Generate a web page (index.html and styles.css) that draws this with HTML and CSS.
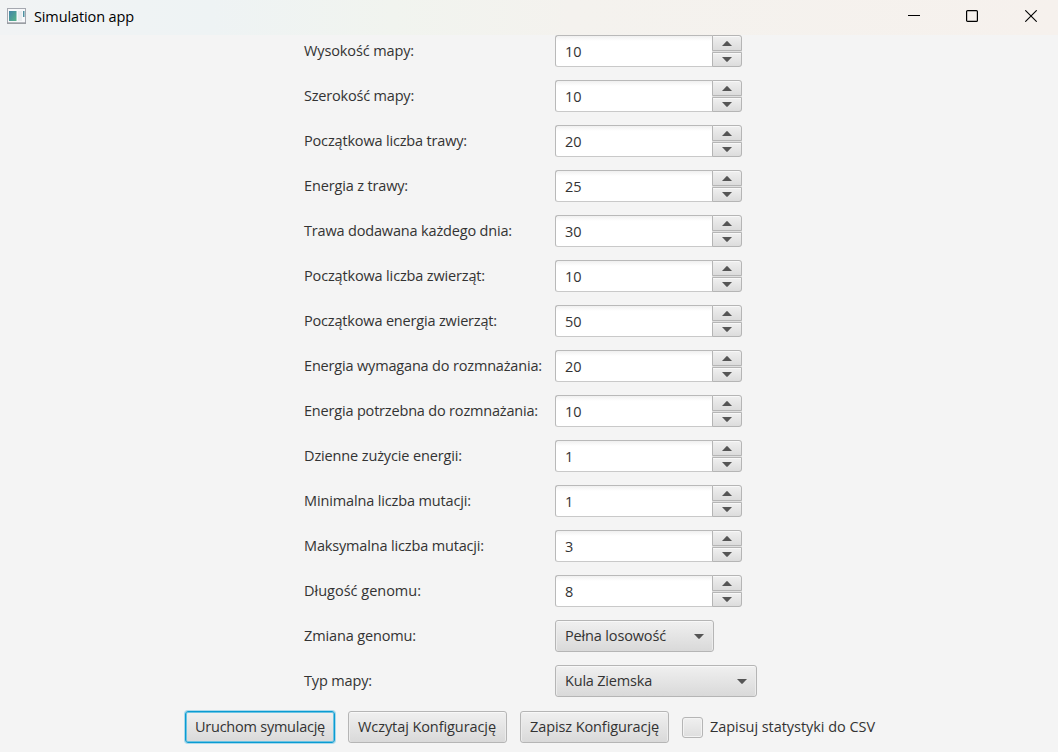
FILE: index.html
```html
<!DOCTYPE html>
<html lang="pl">
<head>
<meta charset="utf-8">
<title>Simulation app</title>
<link rel="stylesheet" href="styles.css">
</head>
<body>
<header class="titlebar">
  <svg class="app-icon" width="19" height="16" viewBox="0 0 19 16">
    <defs><linearGradient id="pane" x1="0" y1="0" x2="1" y2="1"><stop offset="0" stop-color="#4384a8"/><stop offset="1" stop-color="#58b489"/></linearGradient></defs>
    <rect x="0.5" y="0.5" width="18" height="14.5" fill="#f7f8fa" stroke="#a5a8b0"/>
    <path d="M0 15.2H19" stroke="#85888f"/>
    <rect x="2" y="3" width="7.5" height="10" fill="url(#pane)"/>
    <rect x="11" y="3" width="4" height="10" fill="#e9ecef"/>
    <rect x="16" y="3" width="1.5" height="6" fill="#4f91a1"/>
  </svg>
  <span class="title"><span class="fit" data-width="100">Simulation app</span></span>
  <div class="controls">
    <svg width="12" height="12" viewBox="0 0 12 12"><path d="M0 5.5H12" stroke="#000"/></svg>
    <svg width="12" height="12" viewBox="0 0 12 12"><rect x="0.6" y="0.6" width="10.8" height="10.8" rx="1" fill="none" stroke="#000" stroke-width="1.2"/></svg>
    <svg width="12" height="12" viewBox="0 0 12 12"><path d="M0.3 0.3L11.7 11.7M11.7 0.3L0.3 11.7" stroke="#000" stroke-width="1.1"/></svg>
  </div>
</header>
<main class="form" id="form"></main>
<footer class="actions">
  <button class="btn btn-run focused"><span class="fit" data-width="130">Uruchom symulację</span></button>
  <button class="btn btn-load"><span class="fit" data-width="138">Wczytaj Konfigurację</span></button>
  <button class="btn btn-save"><span class="fit" data-width="129">Zapisz Konfigurację</span></button>
  <label class="check"><span class="box"></span><span class="fit" data-width="165">Zapisuj statystyki do CSV</span></label>
</footer>
<script src="app.js"></script>
</body>
</html>
```
FILE: styles.css
```css
* { box-sizing: border-box; }
body {
  margin: 0;
  width: 1058px;
  height: 752px;
  overflow: hidden;
  background: #f4f4f4;
  color: #333;
  font: 14.5px/20px "Open Sans", "Noto Sans", sans-serif;
}
.titlebar {
  display: flex;
  align-items: flex-start;
  height: 35px;
  padding: 8px 21px 0 7px;
  background: linear-gradient(90deg, #f1f3f4 0%, #eef3f4 20%, #f1f4ef 37%, #f4f2ee 54%, #f6f1ed 100%);
  color: #000;
}
.title { margin: -2px 0 0 8px; line-height: 21px; }
.controls { display: flex; gap: 46px; margin: 2px 0 0 auto; }
.controls svg:last-child { margin-left: 1px; }
.controls svg, .app-icon { display: block; }
.form {
  display: grid;
  grid-template-columns: 238px 202px;
  grid-auto-rows: 32px;
  gap: 13px;
  margin-left: 304px;
}
.label { line-height: 31px; white-space: nowrap; }
.fit { display: inline-block; white-space: nowrap; }
.spinner {
  display: grid;
  grid-template-columns: 157px 30px;
  width: 187px;
  height: 32px;
}
.field {
  height: 32px;
  padding-left: 9px;
  border: 1px solid #b9b9b9;
  border-bottom-color: #c9c9c9;
  border-right: 0;
  border-radius: 3px 0 0 3px;
  background: linear-gradient(#f0f0f0, #fff 5px);
  line-height: 32px;
}
.steps {
  display: grid;
  grid-template-rows: 16px 15px;
  gap: 1px;
  border-radius: 0 3px 3px 0;
  background: #e0e0e0;
}
.step {
  display: flex;
  align-items: center;
  justify-content: center;
  border: 1px solid #b5b5b5;
  background: linear-gradient(#f0f0f0, #dcdcdc);
  box-shadow: inset 0 1px 0 #f8f8f8;
}
.step.up { border-radius: 0 3px 0 0; }
.step.down { border-radius: 0 0 3px 0; }
.step svg, .combo svg { display: block; fill: #555; }
.combo, .btn {
  border: 1px solid #b5b5b5;
  border-radius: 3px;
  background: linear-gradient(#f0f0f0, #d9d9d9);
  box-shadow: inset 0 1px 0 #f8f8f8, inset 1px 0 0 #ececec, inset -1px 0 0 #ececec;
}
.combo {
  display: flex;
  align-items: center;
  justify-content: space-between;
  height: 32px;
  padding: 0 9px 1px;
}
.combo svg { margin-top: 2px; }
.combo.narrow { width: 159px; }
.combo.wide { width: 202px; }
.actions { display: flex; gap: 13px; margin: 14px 0 0 185px; }
.btn {
  height: 32px;
  padding: 0 0 1px 9px;
  font: inherit;
  color: inherit;
  text-align: left;
}
.btn-run { width: 150px; }
.btn-load { width: 159px; }
.btn-save { width: 149px; }
.btn.focused {
  border-color: #0a9bd2;
  box-shadow: 0 0 0 1px #a9d9eb, inset 0 0 0 1px #6cc3e2;
}
.check { display: flex; align-items: center; gap: 7px; }
.check .fit { padding-bottom: 1px; }
.box {
  width: 21px;
  height: 21px;
  margin-top: 1px;
  border: 1px solid #b5b5b5;
  border-radius: 3px;
  background: linear-gradient(#f0f0f0, #dedede);
  box-shadow: inset 0 0 0 1px #f3f3f3;
}
```
FILE: app.js
```js
const fields = [
  ["Wysokość mapy:", 110, 10],
  ["Szerokość mapy:", 110, 10],
  ["Początkowa liczba trawy:", 163, 20],
  ["Energia z trawy:", 104, 25],
  ["Trawa dodawana każdego dnia:", 208, 30],
  ["Początkowa liczba zwierząt:", 181, 10],
  ["Początkowa energia zwierząt:", 193, 50],
  ["Energia wymagana do rozmnażania:", 238, 20],
  ["Energia potrzebna do rozmnażania:", 234, 10],
  ["Dzienne zużycie energii:", 158, 1],
  ["Minimalna liczba mutacji:", 167, 1],
  ["Maksymalna liczba mutacji:", 180, 3],
  ["Długość genomu:", 117, 8]
];
const combos = [
  ["Zmiana genomu:", 112, "Pełna losowość", 101, "narrow"],
  ["Typ mapy:", 68, "Kula Ziemska", 87, "wide"]
];
const fit = (text, width) => `<span class="fit" data-width="${width}">${text}</span>`;
const up = '<svg width="10" height="5" viewBox="0 0 10 5"><path d="M0 5L4.3 .4Q5 -.2 5.7 .4L10 5Z"/></svg>';
const down = '<svg width="10" height="5" viewBox="0 0 10 5"><path d="M0 0L4.3 4.6Q5 5.2 5.7 4.6L10 0Z"/></svg>';

document.getElementById("form").innerHTML =
  fields.map(([label, width, value]) => `
    <div class="label">${fit(label, width)}</div>
    <div class="spinner"><div class="field">${value}</div>
      <div class="steps"><div class="step up">${up}</div><div class="step down">${down}</div></div></div>`).join("") +
  combos.map(([label, width, value, valueWidth, size]) => `
    <div class="label">${fit(label, width)}</div>
    <div class="combo ${size}">${fit(value, valueWidth)}${down}</div>`).join("");

// Track each caption so that it fills its intended width.
for (const el of document.querySelectorAll(".fit")) {
  const spacing = (el.dataset.width - el.getBoundingClientRect().width) / el.textContent.length;
  el.style.letterSpacing = spacing + "px";
}
```
